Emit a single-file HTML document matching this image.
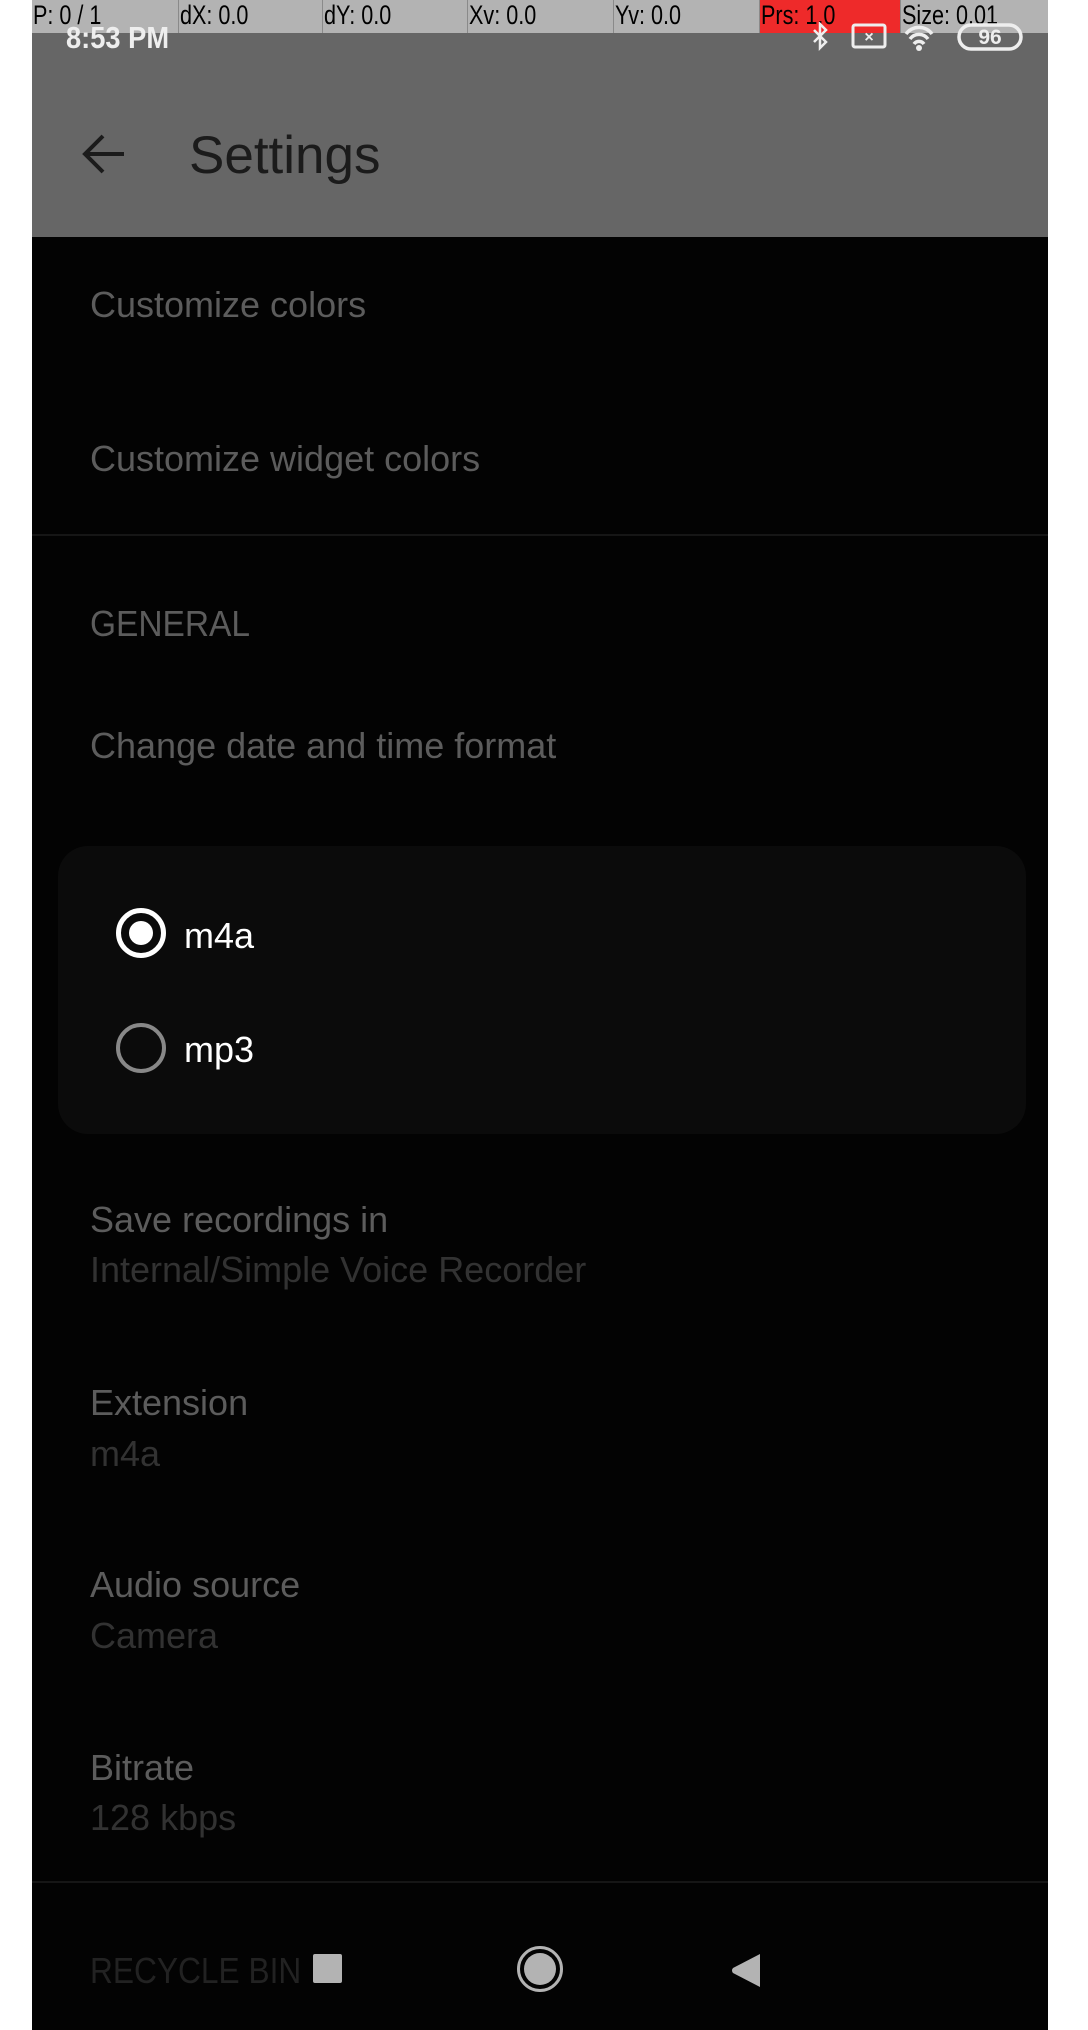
<!DOCTYPE html>
<html><head><meta charset="utf-8"><style>
*{margin:0;padding:0;box-sizing:border-box}
html,body{width:1088px;height:2030px;background:#fff;overflow:hidden;font-family:"Liberation Sans",sans-serif}
#app{position:absolute;left:32px;top:0;width:1016px;height:2030px;background:#030303;overflow:hidden}
.hdr{position:absolute;left:0;top:0;width:100%;height:237px;background:#666}
.dbg{position:absolute;left:0;top:0;width:100%;height:33px;background:#b3b3b3}
.seg{position:absolute;top:0;height:33px;border-left:1px solid #8a8a8a;font-size:27px;color:#000;line-height:30px;padding-left:1px;white-space:nowrap}
.seg span{display:inline-block;transform:scaleX(.8);transform-origin:left}
.t{position:absolute;white-space:nowrap;line-height:1}
.title{font-size:36px;color:#5c5c5c}
.sub{font-size:36px;color:#323232}
.line{position:absolute;left:0;width:100%;height:2px;background:#161616}
</style></head><body>
<div id="app">
<div class="hdr"></div>
<div class="dbg">
<div class="seg" style="left:0;border:none"><span>P: 0 / 1</span></div>
<div class="seg" style="left:146px"><span>dX: 0.0</span></div>
<div class="seg" style="left:290px"><span>dY: 0.0</span></div>
<div class="seg" style="left:435px"><span>Xv: 0.0</span></div>
<div class="seg" style="left:581px"><span>Yv: 0.0</span></div>
<div class="seg" style="left:727px;width:141px;background:#ee2a2a"><span>Prs: 1.0</span></div>
<div class="seg" style="left:868px"><span>Size: 0.01</span></div>
</div>
<div class="t" style="left:34px;top:22px;font-size:31px;font-weight:bold;color:#eee;transform:scaleX(.88);transform-origin:left">8:53 PM</div>
<svg style="position:absolute;left:778px;top:22px" width="240" height="30" viewBox="0 0 240 30">
<path d="M4 8 L16 20 L10 26 L10 2 L16 8 L4 20" fill="none" stroke="#eee" stroke-width="2.5"/>
<rect x="43" y="3" width="32" height="22" rx="2" fill="none" stroke="#eee" stroke-width="3"/>
<text x="59" y="20" font-size="16" font-weight="bold" fill="#eee" text-anchor="middle" font-family="Liberation Sans">×</text>
<path d="M96 12 A16 16 0 0 1 122 12 M100 17 A11 11 0 0 1 118 17 M104 22 A6 6 0 0 1 114 22" fill="none" stroke="#eee" stroke-width="3.5"/>
<circle cx="109" cy="26" r="3" fill="#eee"/>
<rect x="149" y="3" width="62" height="24" rx="12" fill="none" stroke="#eee" stroke-width="3.5"/>
<text x="180" y="22" font-size="21" font-weight="bold" fill="#eee" text-anchor="middle" font-family="Liberation Sans">96</text>
</svg>
<svg style="position:absolute;left:50px;top:133px" width="46" height="42" viewBox="0 0 46 42"><path d="M42 21 H4 M21 3 L3 21 L21 39" fill="none" stroke="#1b1b1b" stroke-width="4"/></svg>
<div class="t" style="left:157px;top:129px;font-size:53px;color:#1b1b1b">Settings</div>

<div class="t title" style="left:58px;top:287px">Customize colors</div>
<div class="t title" style="left:58px;top:441px">Customize widget colors</div>
<div class="line" style="top:534px"></div>
<div class="t title" style="left:58px;top:606px;transform:scaleX(.93);transform-origin:left">GENERAL</div>
<div class="t title" style="left:58px;top:728px">Change date and time format</div>

<div style="position:absolute;left:26px;top:846px;width:968px;height:288px;background:#0b0b0b;border-radius:30px"></div>
<div style="position:absolute;left:84px;top:908px;width:50px;height:50px;border:5px solid #fff;border-radius:50%"></div>
<div style="position:absolute;left:97px;top:921px;width:24px;height:24px;background:#fff;border-radius:50%"></div>
<div class="t" style="left:152px;top:918px;font-size:36px;color:#fff">m4a</div>
<div style="position:absolute;left:84px;top:1023px;width:50px;height:50px;border:4px solid #888;border-radius:50%"></div>
<div class="t" style="left:152px;top:1032px;font-size:36px;color:#fff">mp3</div>

<div class="t title" style="left:58px;top:1202px">Save recordings in</div>
<div class="t sub" style="left:58px;top:1252px">Internal/Simple Voice Recorder</div>
<div class="t title" style="left:58px;top:1385px">Extension</div>
<div class="t sub" style="left:58px;top:1436px">m4a</div>
<div class="t title" style="left:58px;top:1567px">Audio source</div>
<div class="t sub" style="left:58px;top:1618px">Camera</div>
<div class="t title" style="left:58px;top:1750px">Bitrate</div>
<div class="t sub" style="left:58px;top:1800px">128 kbps</div>
<div class="line" style="top:1881px"></div>
<div class="t" style="left:58px;top:1953px;font-size:36px;color:#222;transform:scaleX(.88);transform-origin:left">RECYCLE BIN</div>

<div style="position:absolute;left:281px;top:1954px;width:29px;height:29px;background:#b3b3b3;border-radius:2px"></div>
<div style="position:absolute;left:485px;top:1946px;width:46px;height:46px;border:3px solid #b3b3b3;border-radius:50%"></div>
<div style="position:absolute;left:492px;top:1953px;width:32px;height:32px;background:#b3b3b3;border-radius:50%"></div>
<svg style="position:absolute;left:699px;top:1953px" width="30" height="35" viewBox="0 0 30 35"><path d="M29 1 V34 L2 20 Q0 17.5 2 15 Z" fill="#b3b3b3"/></svg>
</div>
</body></html>
